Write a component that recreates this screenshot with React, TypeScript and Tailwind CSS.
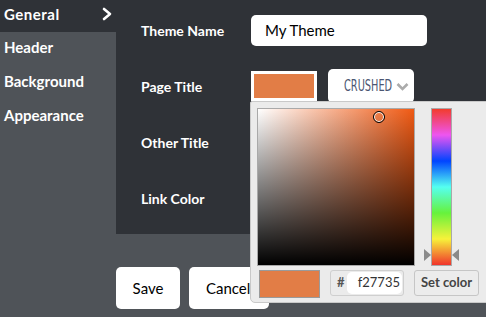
import React from "react";

const labels = ["Theme Name", "Page Title", "Other Title", "Link Color"];

function ColorPicker() {
  return (
    <div className="absolute left-[-1px] top-[32px] z-10 w-[250px] rounded-bl-[5px] rounded-tl-[2px] border border-[#c9c9c9] bg-[#ebebeb] pl-[6px] pt-[6px] pb-[4px]">
      <div className="flex">
        {/* saturation / value square */}
        <div className="relative h-[158px] w-[158px] border border-[#a9a9a9] bg-[linear-gradient(to_top,#000,transparent),linear-gradient(to_right,#fff,#f05a14)]">
          <span className="absolute left-[115px] top-[2px] h-[12px] w-[12px] rounded-full border border-black shadow-[inset_0_0_0_1px_#fff]" />
        </div>
        {/* hue bar */}
        <div className="relative ml-[16px] h-[158px] w-[21px] border border-[#a9a9a9] bg-[linear-gradient(to_bottom,#f23c2c,#ee55f0,#0044ff,#55fff0,#66f23c,#f7f23a,#f0342c)]">
          <span className="absolute left-[-8px] top-[140px] h-0 w-0 border-y-[6px] border-l-[7px] border-y-transparent border-l-[#8a8a8a]" />
          <span className="absolute right-[-8px] top-[140px] h-0 w-0 border-y-[6px] border-r-[7px] border-y-transparent border-r-[#8a8a8a]" />
        </div>
      </div>
      <div className="mt-[4px] flex items-start">
        <div className="ml-[2px] h-[28px] w-[61px] border border-[#9a9a9a] bg-[#e27d46]" />
        <div className="ml-[10px] flex h-[26px] w-[74px] items-center rounded-[3px] border border-[#cfcfcf] pl-[6px] pr-[1px]">
          <span className="text-[13px] font-bold text-[#555]">#</span>
          <span className="ml-[2px] flex h-[22px] flex-1 items-center justify-end rounded-[5px] bg-white pr-[2px] text-[13px] text-[#333]">
            f27735
          </span>
        </div>
        <button className="ml-[10px] flex h-[26px] w-[65px] items-center justify-center rounded-[3px] border border-[#c6c6c6] bg-[#ececec] text-[13px] font-bold text-[#444]">
          Set color
        </button>
      </div>
    </div>
  );
}

export default function App() {
  return (
    <div
      className="flex h-[317px] w-[486px] overflow-hidden bg-[#4f5358]"
      style={{ fontFamily: "Lato, 'Open Sans', sans-serif" }}
    >
      {/* sidebar */}
      <div className="w-[116px] shrink-0 text-[15px] font-bold text-white">
        <div className="flex h-[32px] items-center justify-between bg-[#2f3237] pb-[4px] pl-[4px] pr-[3px]">
          <span className="tracking-[0.5px]">General</span>
          <svg width="12" height="14" viewBox="0 0 12 14" fill="none">
            <polyline points="3,2 9,7 3,12" stroke="#fff" strokeWidth="2.6" strokeLinecap="round" strokeLinejoin="round" />
          </svg>
        </div>
        <div className="flex h-[32px] items-center pb-[2px] pl-[4px]">Header</div>
        <div className="flex h-[34px] items-center pl-[4px]">Background</div>
        <div className="flex h-[34px] items-center pl-[4px]">Appearance</div>
      </div>

      {/* main */}
      <div className="flex flex-1 flex-col">
        <div className="h-[234px] bg-[#2f3237] pl-[25px] pt-[2px]">
          {labels.map((label, i) => (
            <div key={label} className="flex h-[56px] items-center">
              <span className="w-[110px] text-[14px] font-bold text-white">{label}</span>
              {i === 0 && (
                <div className="flex h-[31px] w-[176px] items-center rounded-[5px] bg-white pl-[14px] text-[15px] text-black">
                  My Theme
                </div>
              )}
              {i === 1 && (
                <div className="relative flex items-center">
                  <div className="h-[30px] w-[66px] border-[3px] border-white bg-[#e27d46]" />
                  <div className="ml-[11px] flex h-[34px] w-[86px] items-center justify-between rounded-[5px] bg-white pl-[16px] pr-[5px]">
                    <span
                      className="inline-block w-[48px] origin-left scale-x-[0.68] whitespace-nowrap text-[16px] uppercase text-[#4b5672]"
                      style={{ fontFamily: "'DejaVu Sans Condensed', 'Liberation Sans Narrow', sans-serif" }}
                    >
                      crushed
                    </span>
                    <svg width="13" height="9" viewBox="0 0 13 9" fill="none">
                      <polyline points="1.5,2 6.5,7 11.5,2" stroke="#ababab" strokeWidth="2.6" />
                    </svg>
                  </div>
                  <ColorPicker />
                </div>
              )}
            </div>
          ))}
        </div>
        <div className="mt-[33px] flex gap-[9px]">
          <button className="h-[42px] w-[64px] rounded-[5px] bg-white text-[15px] text-black">Save</button>
          <button className="h-[42px] w-[80px] rounded-[5px] bg-white text-left text-[15px] text-black">
            <span className="ml-[17px]">Cancel</span>
          </button>
        </div>
      </div>
    </div>
  );
}
